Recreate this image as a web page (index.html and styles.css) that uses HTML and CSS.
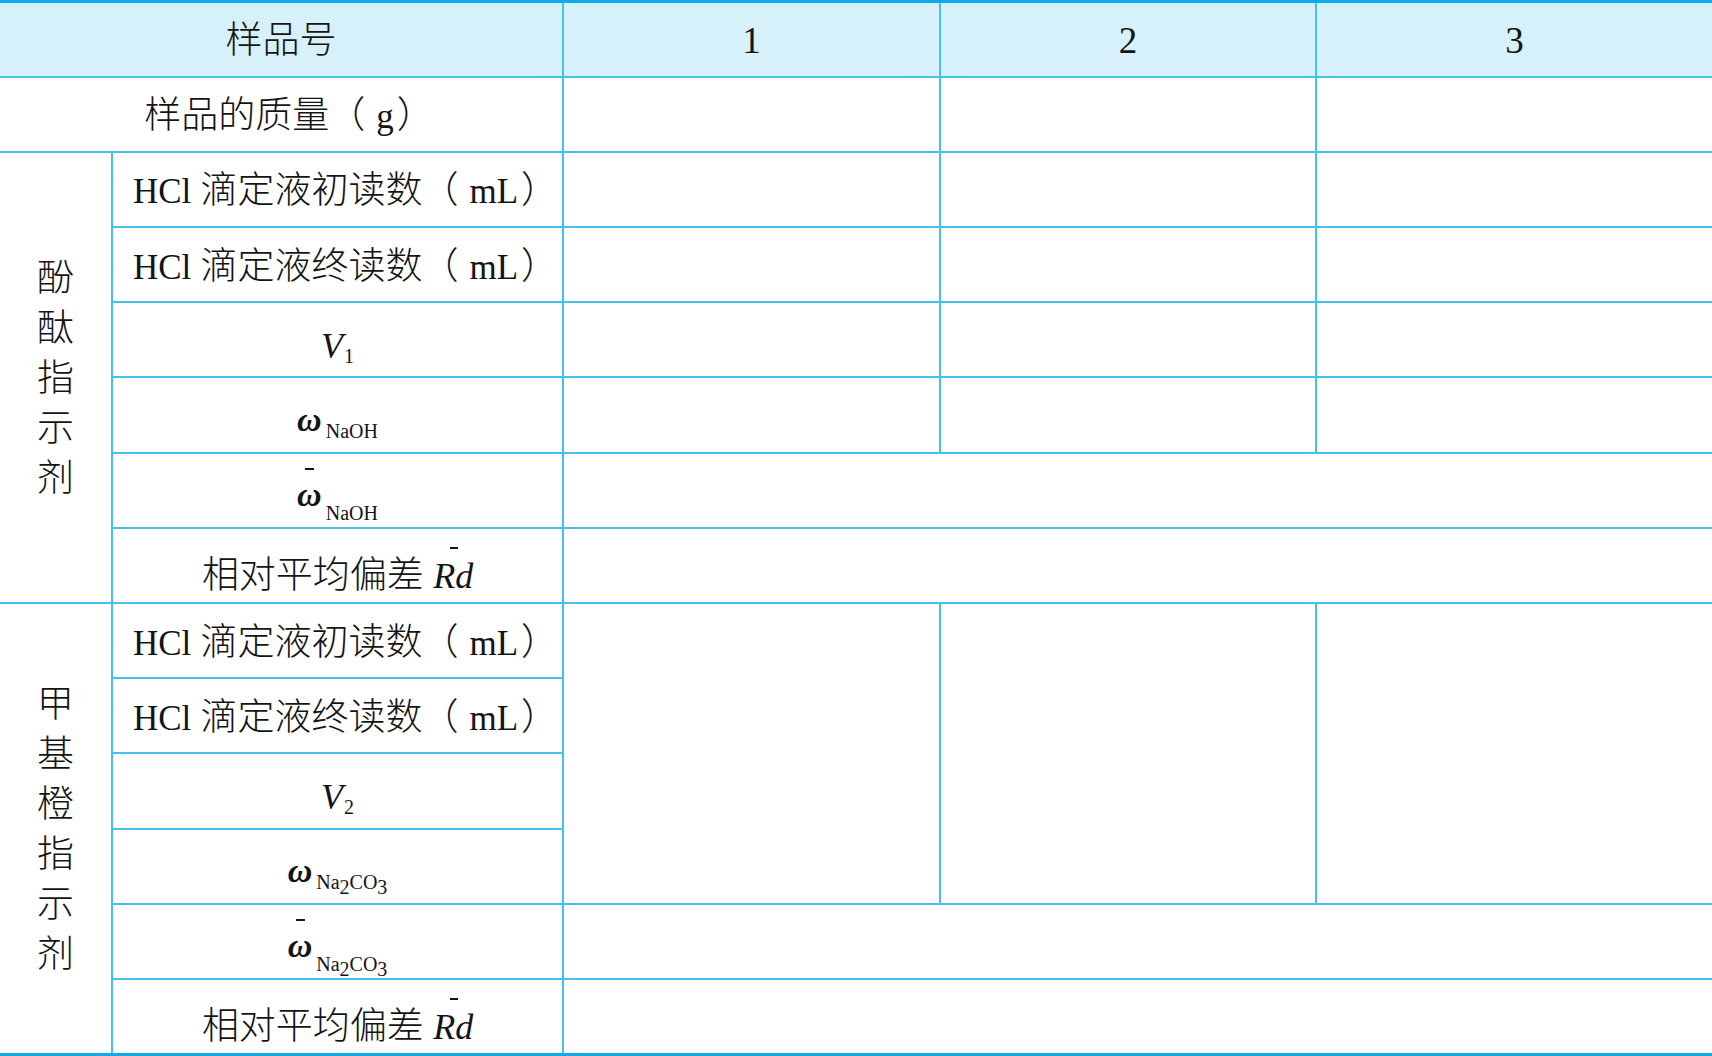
FILE: index.html
```html
<!DOCTYPE html>
<html lang="zh-CN">
<head>
<meta charset="utf-8">
<title>样品测定记录表</title>
<link rel="stylesheet" href="styles.css">
</head>
<body>
<table class="grid">
  <colgroup>
    <col class="c0"><col class="c1"><col class="c2"><col class="c3"><col class="c4">
  </colgroup>
  <thead>
    <tr class="head">
      <th colspan="2">样品号</th>
      <th class="num">1</th>
      <th class="num">2</th>
      <th class="num">3</th>
    </tr>
  </thead>
  <tbody>
    <tr>
      <td colspan="2">样品的质量<span class="paren">（<span class="lat">g</span>）</span></td><td></td><td></td><td></td>
    </tr>
    <tr>
      <td rowspan="6" class="vcell"><div class="vlabel"><span>酚</span><span>酞</span><span>指</span><span>示</span><span>剂</span></div></td>
      <td><span class="lat">HCl</span> 滴定液初读数<span class="paren">（<span class="lat">mL</span>）</span></td><td></td><td></td><td></td>
    </tr>
    <tr>
      <td><span class="lat">HCl</span> 滴定液终读数<span class="paren">（<span class="lat">mL</span>）</span></td><td></td><td></td><td></td>
    </tr>
    <tr>
      <td><span class="nudge-v"><span class="var">V</span><span class="sub sub-v">1</span></span></td><td></td><td></td><td></td>
    </tr>
    <tr>
      <td><span class="nudge-w"><span class="omega">ω</span><span class="sub">NaOH</span></span></td><td></td><td></td><td></td>
    </tr>
    <tr>
      <td><span class="nudge-low"><span class="omega bar">ω</span><span class="sub sub-deep">NaOH</span></span></td><td colspan="3"></td>
    </tr>
    <tr>
      <td><span class="nudge-rd">相对平均偏差 <span class="var rbar">R</span><span class="var">d</span></span></td><td colspan="3"></td>
    </tr>
    <tr>
      <td rowspan="6" class="vcell"><div class="vlabel"><span>甲</span><span>基</span><span>橙</span><span>指</span><span>示</span><span>剂</span></div></td>
      <td><span class="lat">HCl</span> 滴定液初读数<span class="paren">（<span class="lat">mL</span>）</span></td><td rowspan="4"></td><td rowspan="4"></td><td rowspan="4"></td>
    </tr>
    <tr>
      <td><span class="lat">HCl</span> 滴定液终读数<span class="paren">（<span class="lat">mL</span>）</span></td>
    </tr>
    <tr>
      <td><span class="nudge-v"><span class="var">V</span><span class="sub sub-v">2</span></span></td>
    </tr>
    <tr>
      <td><span class="nudge-w"><span class="omega">ω</span><span class="sub">Na<span class="ssub">2</span>CO<span class="ssub">3</span></span></span></td>
    </tr>
    <tr>
      <td><span class="nudge-low"><span class="omega bar">ω</span><span class="sub sub-deep">Na<span class="ssub">2</span>CO<span class="ssub">3</span></span></span></td><td colspan="3"></td>
    </tr>
    <tr>
      <td><span class="nudge-rd">相对平均偏差 <span class="var rbar">R</span><span class="var">d</span></span></td><td colspan="3"></td>
    </tr>
  </tbody>
</table>
</body>
</html>
```

FILE: styles.css
```css
html, body {
  margin: 0;
  padding: 0;
  background: #ffffff;
}

body {
  width: 1712px;
  height: 1056px;
  overflow: hidden;
  font-family: "Liberation Serif", "Noto Sans CJK SC", serif;
  color: #141414;
}

.grid {
  width: 1712px;
  table-layout: fixed;
  border-collapse: collapse;
  border-top: 3px solid #12aae6;
  border-bottom: 3px solid #12aae6;
  font-size: 37px;
  font-weight: 300;
}

.c0 { width: 112px; }
.c1 { width: 451px; }
.c2 { width: 377px; }
.c3 { width: 376px; }
.c4 { width: 396px; }

.grid tr {
  height: 75.2px;
}

.grid th,
.grid td {
  padding: 4px 0 0;
  text-align: center;
  vertical-align: middle;
  border: 2px solid #45c0ef;
  white-space: nowrap;
  line-height: 40px;
}

.grid tr > :first-child {
  border-left: none;
}

.grid tr > :last-child {
  border-right: none;
}

.grid thead tr:first-child > * {
  border-top: 3px solid #12aae6;
}

.grid tbody tr:last-child > * {
  border-bottom: 3px solid #12aae6;
}

.head th {
  background: #d7f1fb;
  font-weight: 300;
}

.head .num {
  font-size: 37px;
}

.lat {
  font-size: 35px;
  line-height: 1;
}

.paren {
  margin-left: -1px;
  margin-right: -16px;
}

.paren .lat {
  margin: 0 3px 0 11px;
}

.vcell {
  border-left: none;
}

.vlabel {
  display: flex;
  flex-direction: column;
  align-items: center;
  line-height: 50px;
}

.var {
  font-style: italic;
  font-size: 36px;
  line-height: 1;
}

.omega {
  font-style: italic;
  font-weight: bold;
  font-size: 34px;
  line-height: 1;
}

.sub {
  font-size: 20px;
  line-height: 1;
  vertical-align: -7px;
  margin-left: 4px;
}

.sub-v {
  vertical-align: -5px;
  margin-left: 1px;
}

.sub-deep {
  vertical-align: -14px;
}

.ssub {
  display: inline-block;
  transform: translateY(5px);
}

.nudge-v,
.nudge-w,
.nudge-low,
.nudge-rd {
  display: inline-block;
}

.nudge-v { transform: translateY(4px); }
.nudge-w { transform: translateY(3px); }
.nudge-low { transform: translateY(6px); }
.nudge-rd { transform: translateY(9px); }

.bar,
.rbar {
  position: relative;
}

.bar::before {
  content: "";
  position: absolute;
  left: 8px;
  top: -8px;
  width: 9px;
  height: 2px;
  background: #141414;
}

.rbar::before {
  content: "";
  position: absolute;
  left: 17px;
  top: -9px;
  width: 8px;
  height: 2px;
  background: #141414;
}
```
